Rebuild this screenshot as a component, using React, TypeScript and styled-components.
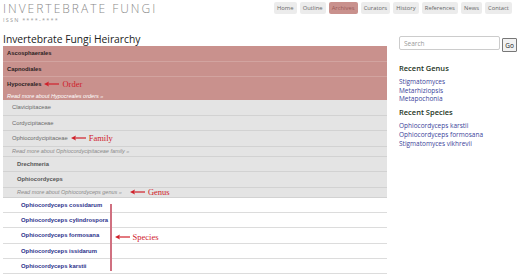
import styled, { createGlobalStyle } from "styled-components";

const GlobalStyle = createGlobalStyle`
  body {
    margin: 0;
    background: #fff;
    font-family: "Liberation Sans", Arial, sans-serif;
  }
  * {
    box-sizing: border-box;
  }
`;

const navItems = ["Home", "Outline", "Archives", "Curators", "History", "References", "News", "Contact"];
const species = [
  "Ophiocordyceps cossidarum",
  "Ophiocordyceps cylindrospora",
  "Ophiocordyceps formosana",
  "Ophiocordyceps issidarum",
  "Ophiocordyceps karstii",
];

function Arrow({ width = 15 }: { width?: number }) {
  return (
    <svg width={width} height="6" viewBox={`0 0 ${width} 6`}>
      <line x1="2" y1="3" x2={width} y2="3" stroke="#d0202a" strokeWidth="1.2" />
      <path d="M0 3 L5 0.6 L4 3 L5 5.4 Z" fill="#d0202a" />
    </svg>
  );
}

export default function App() {
  return (
    <>
      <GlobalStyle />
      <Page>
        <Header>
          <Brand>
            <Title>INVERTEBRATE FUNGI</Title>
            <Issn>ISSN ****-****</Issn>
          </Brand>
          <Nav>
            {navItems.map((n) => (
              <NavButton key={n} $active={n === "Archives"}>
                {n}
              </NavButton>
            ))}
          </Nav>
        </Header>
        <Body>
          <Main>
            <Heading>Invertebrate Fungi Heirarchy</Heading>
            <OrderBlock>
              <Row $tone="order">Ascosphaerales</Row>
              <Row $tone="order">Capnodiales</Row>
              <Row $tone="order" $short>
                Hypocreales
                <Note>
                  <Arrow />
                  Order
                </Note>
              </Row>
              <ReadMore $tone="order">Read more about Hypocreales orders »</ReadMore>
            </OrderBlock>
            <FamilyBlock>
              <Row $tone="family">Clavicipitaceae</Row>
              <Row $tone="family">Cordycipitaceae</Row>
              <Row $tone="family">
                Ophiocordycipitaceae
                <Note>
                  <Arrow />
                  Family
                </Note>
              </Row>
              <ReadMore $tone="family">Read more about Ophiocordycipitaceae family »</ReadMore>
              <Row $tone="genus">Drechmeria</Row>
              <Row $tone="genus">Ophiocordyceps</Row>
              <ReadMore $tone="genus">
                Read more about Ophiocordyceps genus »
                <Note $gap={8}>
                  <Arrow />
                  Genus
                </Note>
              </ReadMore>
            </FamilyBlock>
            <SpeciesBlock>
              {species.map((s) => (
                <SpeciesRow key={s}>{s}</SpeciesRow>
              ))}
              <SpeciesMark>
                <VLine />
                <Note $gap={0}>
                  <Arrow />
                  Species
                </Note>
              </SpeciesMark>
            </SpeciesBlock>
          </Main>
          <Side>
            <SearchRow>
              <SearchInput placeholder="Search" />
              <GoButton>Go</GoButton>
            </SearchRow>
            <SideTitle>Recent Genus</SideTitle>
            <SideLink>Stigmatomyces</SideLink>
            <SideLink>Metarhiziopsis</SideLink>
            <SideLink>Metapochonia</SideLink>
            <SideTitle>Recent Species</SideTitle>
            <SideLink>Ophiocordyceps karstii</SideLink>
            <SideLink>Ophiocordyceps formosana</SideLink>
            <SideLink>Stigmatomyces vikhrevii</SideLink>
          </Side>
        </Body>
      </Page>
    </>
  );
}

const Page = styled.div`
  width: 520px;
  height: 275px;
  overflow: hidden;
  padding: 2px 3px 0 3px;
`;

const Header = styled.div`
  display: flex;
  justify-content: space-between;
  align-items: flex-start;
  height: 30px;
`;

const Brand = styled.div`
  display: flex;
  flex-direction: column;
`;

const Title = styled.div`
  font-family: "Open Sans", "Liberation Sans", sans-serif;
  font-weight: 300;
  font-size: 12px;
  line-height: 13px;
  letter-spacing: 2px;
  color: #8a8a8a;
`;

const Issn = styled.div`
  font-family: "Open Sans", "Liberation Sans", sans-serif;
  font-size: 5.5px;
  line-height: 7px;
  margin-top: 2px;
  letter-spacing: 1.2px;
  color: #9a9a9a;
`;

const Nav = styled.div`
  display: flex;
  gap: 3px;
  margin-right: 5px;
`;

const NavButton = styled.div<{ $active?: boolean }>`
  font-family: "Open Sans", "Liberation Sans", sans-serif;
  font-size: 5.8px;
  height: 12px;
  line-height: 12px;
  padding: 0 3.1px;
  border-radius: 2px;
  background: ${(p) => (p.$active ? "#c9918d" : "#ececec")};
  color: ${(p) => (p.$active ? "#9a5a58" : "#666")};
`;

const Body = styled.div`
  display: flex;
  gap: 12px;
`;

const Main = styled.div`
  width: 384px;
  display: flex;
  flex-direction: column;
`;

const Heading = styled.div`
  font-family: "Open Sans", "Liberation Sans", sans-serif;
  font-size: 10.3px;
  line-height: 14px;
  color: #222;
  height: 14px;
`;

const OrderBlock = styled.div`
  background: #c9918d;
  display: flex;
  flex-direction: column;
`;

const FamilyBlock = styled.div`
  background: #e4e4e4;
  display: flex;
  flex-direction: column;
`;

const toneStyles = {
  order: { pad: 4, color: "#2a2222", weight: 700, border: "#d2a4a0", more: "#fff", moreH: 9 },
  family: { pad: 9, color: "#6a6a6a", weight: 400, border: "#d2d2d2", more: "#8a8a8a", moreH: 10 },
  genus: { pad: 14, color: "#555", weight: 700, border: "#d2d2d2", more: "#8a8a8a", moreH: 10 },
};

type Tone = keyof typeof toneStyles;

const Row = styled.div<{ $tone: Tone; $short?: boolean }>`
  display: flex;
  align-items: center;
  height: ${(p) => (p.$short ? 14 : 15.5)}px;
  padding-left: ${(p) => toneStyles[p.$tone].pad}px;
  font-size: 5.8px;
  font-weight: ${(p) => toneStyles[p.$tone].weight};
  color: ${(p) => toneStyles[p.$tone].color};
  border-bottom: ${(p) => (p.$short ? "none" : `1px solid ${toneStyles[p.$tone].border}`)};
`;

const ReadMore = styled.div<{ $tone: Tone }>`
  display: flex;
  align-items: center;
  height: ${(p) => toneStyles[p.$tone].moreH}px;
  padding-left: ${(p) => toneStyles[p.$tone].pad}px;
  font-size: 5.5px;
  font-style: italic;
  color: ${(p) => toneStyles[p.$tone].more};
  border-bottom: ${(p) => (p.$tone === "order" ? "none" : "1px solid #d2d2d2")};
`;

const Note = styled.span<{ $gap?: number }>`
  display: inline-flex;
  align-items: center;
  gap: 3px;
  margin-left: ${(p) => p.$gap ?? 3}px;
  font-family: "Liberation Serif", "Times New Roman", serif;
  font-style: normal;
  font-weight: 400;
  font-size: 8.5px;
  color: #d0202a;
`;

const SpeciesBlock = styled.div`
  position: relative;
  display: flex;
  flex-direction: column;
`;

const SpeciesRow = styled.div`
  display: flex;
  align-items: center;
  height: 15.4px;
  padding-left: 18px;
  font-size: 5.9px;
  font-weight: 700;
  color: #2b2f8a;
  border-bottom: 1px solid #dcdcdc;
`;

const SpeciesMark = styled.div`
  position: absolute;
  left: 107px;
  top: 6px;
  height: 67px;
  display: flex;
  align-items: center;
`;

const VLine = styled.div`
  width: 1.5px;
  height: 100%;
  background: #d07080;
  margin-right: 3px;
`;

const Side = styled.div`
  width: 118px;
  display: flex;
  flex-direction: column;
  padding-top: 4px;
`;

const SearchRow = styled.div`
  display: flex;
  align-items: flex-start;
  gap: 2px;
  margin-bottom: 11px;
`;

const SearchInput = styled.input`
  width: 102px;
  height: 14px;
  border: 1px solid #ccc;
  border-radius: 2px;
  font-family: "Open Sans", "Liberation Sans", sans-serif;
  font-size: 6.5px;
  padding: 0 4px;
  color: #555;
  &::placeholder {
    color: #999;
  }
`;

const GoButton = styled.button`
  margin-top: 2px;
  width: 15px;
  height: 14px;
  padding: 0;
  border: 1px solid #777;
  border-radius: 1px;
  background: #f2f2f2;
  font-family: "Open Sans", "Liberation Sans", sans-serif;
  font-size: 6.5px;
  color: #222;
`;

const SideTitle = styled.div`
  font-family: "Open Sans", "Liberation Sans", sans-serif;
  font-weight: 600;
  font-size: 7.5px;
  line-height: 10px;
  color: #243424;
  margin-bottom: 5px;
  &:not(:nth-child(2)) {
    margin-top: 3px;
  }
`;

const SideLink = styled.div`
  font-family: "Open Sans", "Liberation Sans", sans-serif;
  font-size: 6.5px;
  line-height: 8.7px;
  color: #3a3f9a;
`;
